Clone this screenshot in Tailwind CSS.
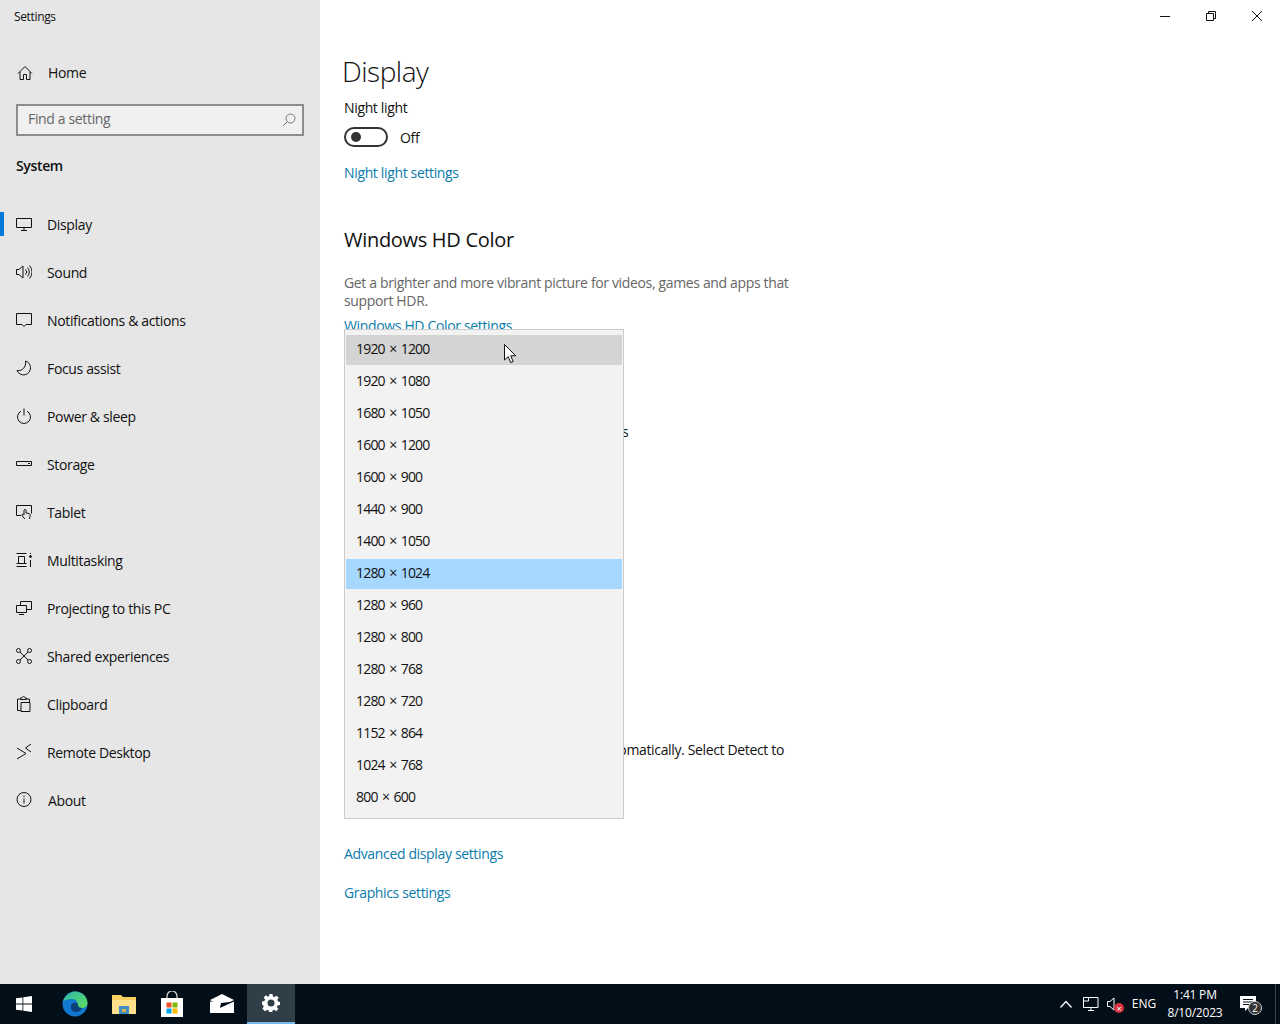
<!DOCTYPE html>
<html lang="en">
<head>
  <meta charset="UTF-8">
  <title>Settings</title>
  <script src="https://cdn.jsdelivr.net/npm/@tailwindcss/browser@4"></script>
</head>
<body class="relative w-[1280px] h-[1024px] overflow-hidden bg-white text-[#111] font-['Open_Sans','Noto_Sans',sans-serif] text-[14px] tracking-[-0.35px]">
  <div class="flex h-[984px]">
    <!-- sidebar -->
    <aside class="w-[320px] bg-[#e6e6e6] shrink-0">
      <div class="h-8 pl-[14px] text-[12px] leading-[34px]">Settings</div>
      <a class="flex items-center h-12 mt-[17px] pl-4">
        <svg class="w-4 h-4 mr-[15px] ml-px" viewBox="0 0 16 16" fill="none" stroke="#111" stroke-width="1"><path d="M1 8.500 8 1.500l7 7M3 7v7.500h3.500V9.500h3v5H13V7"/></svg>
        <span class="-mt-[2px]">Home</span>
      </a>
      <div class="flex items-center justify-between h-8 mx-4 mt-[7px] pl-[10px] pr-[6px] border-2 border-[#8d8d8d] bg-[#f0f0f0] text-[#666]">
        <span class="-mt-[4px]">Find a setting</span>
        <svg class="w-[14px] h-[14px]" viewBox="0 0 14 14" fill="none" stroke="#777" stroke-width="1"><circle cx="8.500" cy="5.500" r="4.500"/><path d="M5.200 8.800 1 13"/></svg>
      </div>
      <div class="pl-4 mt-5 font-semibold leading-5">System</div>
      <nav class="mt-6">
        <a class="relative flex items-center h-12 pl-4">
          <span class="absolute left-0 top-[12px] w-1 h-6 bg-[#0078d7]"></span>
          <svg class="w-4 h-4 mr-[15px]" viewBox="0 0 16 16" fill="none" stroke="#111"><path d="M.5 2.500h15v9H.5zM8 11.500v2.500M5 14.500h6"/></svg>
          <span>Display</span>
        </a>
        <a class="flex items-center h-12 pl-4">
          <svg class="w-4 h-4 mr-[15px]" viewBox="0 0 16 16" fill="none" stroke="#111"><path d="M.5 5.500h2.500L7 2v12l-4-3.500H.5zM9.500 5.500a3.500 3.500 0 0 1 0 5M11.500 3.500a6.500 6.500 0 0 1 0 9M13.500 1.500a9.500 9.500 0 0 1 0 13"/></svg>
          <span>Sound</span>
        </a>
        <a class="flex items-center h-12 pl-4">
          <svg class="w-4 h-4 mr-[15px]" viewBox="0 0 16 16" fill="none" stroke="#111"><path d="M.5 1.500h15v11H10l-2 2-2-2H.5z"/></svg>
          <span>Notifications &amp; actions</span>
        </a>
        <a class="flex items-center h-12 pl-4">
          <svg class="w-4 h-4 mr-[15px]" viewBox="0 0 16 16" fill="none" stroke="#111"><path d="M9.500 1c3 1 5 3.500 5 6.500a7 7 0 0 1-13.500 3c5 1 9.500-3.500 8.500-9.500z"/></svg>
          <span>Focus assist</span>
        </a>
        <a class="flex items-center h-12 pl-4">
          <svg class="w-4 h-4 mr-[15px]" viewBox="0 0 16 16" fill="none" stroke="#111"><path d="M5 3.200a6.500 6.500 0 1 0 6 0M8 .5v7"/></svg>
          <span>Power &amp; sleep</span>
        </a>
        <a class="flex items-center h-12 pl-4">
          <svg class="w-4 h-4 mr-[15px]" viewBox="0 0 16 16" fill="none" stroke="#111"><path d="M.5 5.500h15v4H.5zM12 7.500h2"/></svg>
          <span>Storage</span>
        </a>
        <a class="flex items-center h-12 pl-4">
          <svg class="w-4 h-4 mr-[15px]" viewBox="0 0 16 16" fill="none" stroke="#111"><path d="M5 11.500H.5v-10h15v8M9 15c-1-1-3-3-3-4s1-1 2 0V6.500c0-1.500 2-1.500 2 0V9l3 .5c1 .3 1.500 1 1 3l-.5 2.500"/></svg>
          <span>Tablet</span>
        </a>
        <a class="flex items-center h-12 pl-4">
          <svg class="w-4 h-4 mr-[15px]" viewBox="0 0 16 16" fill="none" stroke="#111"><path d="M.5 1.500h10M.5 14.500h10M2.500 4.500h6v7h-6zM.5 11.500h10M14.500 8v7M14.500 1v1"/><circle cx="14.500" cy="4.500" r="1" fill="#111"/></svg>
          <span>Multitasking</span>
        </a>
        <a class="flex items-center h-12 pl-4">
          <svg class="w-4 h-4 mr-[15px]" viewBox="0 0 16 16" fill="none" stroke="#111"><path d="M4.500 5V1.500h11v8H11M.5 5.500h10v7H.5zM3 14.500h5"/></svg>
          <span>Projecting to this PC</span>
        </a>
        <a class="flex items-center h-12 pl-4">
          <svg class="w-4 h-4 mr-[15px]" viewBox="0 0 16 16" fill="none" stroke="#111"><circle cx="2.500" cy="2.500" r="2"/><circle cx="13.500" cy="2.500" r="2"/><circle cx="2.500" cy="13.500" r="2"/><circle cx="13.500" cy="13.500" r="2"/><path d="m4 4 8 8M12 4l-8 8"/></svg>
          <span>Shared experiences</span>
        </a>
        <a class="flex items-center h-12 pl-4">
          <svg class="w-4 h-4 mr-[15px]" viewBox="0 0 16 16" fill="none" stroke="#111"><path d="M4 3H1.500v11.500H5M11 3h2.500v3M5 6.500h9v9H5zM4.500 3.500h6V2H9C9 0 6 0 6 2H4.500z"/></svg>
          <span>Clipboard</span>
        </a>
        <a class="flex items-center h-12 pl-4">
          <svg class="w-4 h-4 mr-[15px]" viewBox="0 0 16 16" fill="none" stroke="#111"><path d="m1 4 9 5.500L1 15M15 0 9.500 4l5.500 4"/></svg>
          <span>Remote Desktop</span>
        </a>
        <a class="flex items-center h-12 pl-4">
          <svg class="w-4 h-4 mr-4" viewBox="0 0 16 16" fill="none" stroke="#111"><circle cx="8" cy="7.500" r="7"/><path d="M8 6.500v5M8 3.500v1.500"/></svg>
          <span>About</span>
        </a>
      </nav>
    </aside>

    <!-- main pane -->
    <main class="flex-1">
      <div class="flex justify-end h-8">
        <div class="flex items-center justify-center w-[46px]"><svg class="w-[10px] h-[10px]" viewBox="0 0 10 10" stroke="#111"><path d="M0 5.500h10"/></svg></div>
        <div class="flex items-center justify-center w-[46px]"><svg class="w-[10px] h-[10px]" viewBox="0 0 10 10" fill="none" stroke="#111"><path d="M.5 2.500h7v7h-7zM2.500 2.500v-2h7v7h-2"/></svg></div>
        <div class="flex items-center justify-center w-[46px]"><svg class="w-[10px] h-[10px]" viewBox="0 0 10 10" stroke="#111"><path d="m0 0 10 10M10 0 0 10"/></svg></div>
      </div>
      <div class="pl-6 w-[484px]">
        <h1 class="-ml-[2px] mt-[19px] text-[28px] leading-10 font-light tracking-[-0.5px]">Display</h1>
        <div class="mt-[7px] leading-5">Night light</div>
        <div class="flex items-center mt-[9px] h-5">
          <div class="flex items-center w-11 h-5 pl-[5px] rounded-full border-2 border-[#333]"><span class="w-[10px] h-[10px] rounded-full bg-[#333]"></span></div>
          <span class="ml-3">Off</span>
        </div>
        <a class="block mt-4 leading-5 text-[#0b7bab]">Night light settings</a>
        <h2 class="mt-[43px] text-[20px] leading-7 tracking-[-0.3px]">Windows HD Color</h2>
        <p class="mt-5 leading-[18px] text-[#666]">Get a brighter and more vibrant picture for videos, games and apps that support HDR.</p>
        <a class="block mt-[6px] leading-5 text-[#0b7bab]">Windows HD Color settings</a>
        <!-- only the ends of these two lines stick out from under the dropdown -->
        <div class="mt-[86px] pl-[278px] leading-5">s</div>
        <div class="mt-[298px] w-[440px] text-right leading-5 whitespace-nowrap">omatically. Select Detect to</div>
        <a class="block mt-[84px] leading-5 text-[#0b7bab]">Advanced display settings</a>
        <a class="block mt-[19px] leading-5 text-[#0b7bab]">Graphics settings</a>
      </div>
    </main>
  </div>

  <!-- resolution dropdown -->
  <ul class="absolute left-[344px] top-[329px] w-[280px] h-[490px] py-[5px] px-px border border-[#ccc] bg-[#f2f2f2] flex flex-col gap-[2px] tracking-[-0.8px] [word-spacing:1.5px]">
    <li class="h-[30px] pl-[10px] leading-[27px] bg-[#d4d4d4]">1920 × 1200</li>
    <li class="h-[30px] pl-[10px] leading-[27px]">1920 × 1080</li>
    <li class="h-[30px] pl-[10px] leading-[27px]">1680 × 1050</li>
    <li class="h-[30px] pl-[10px] leading-[27px]">1600 × 1200</li>
    <li class="h-[30px] pl-[10px] leading-[27px]">1600 × 900</li>
    <li class="h-[30px] pl-[10px] leading-[27px]">1440 × 900</li>
    <li class="h-[30px] pl-[10px] leading-[27px]">1400 × 1050</li>
    <li class="h-[30px] pl-[10px] leading-[27px] bg-[#a6d8ff]">1280 × 1024</li>
    <li class="h-[30px] pl-[10px] leading-[27px]">1280 × 960</li>
    <li class="h-[30px] pl-[10px] leading-[27px]">1280 × 800</li>
    <li class="h-[30px] pl-[10px] leading-[27px]">1280 × 768</li>
    <li class="h-[30px] pl-[10px] leading-[27px]">1280 × 720</li>
    <li class="h-[30px] pl-[10px] leading-[27px]">1152 × 864</li>
    <li class="h-[30px] pl-[10px] leading-[27px]">1024 × 768</li>
    <li class="h-[30px] pl-[10px] leading-[27px]">800 × 600</li>
  </ul>

  <!-- mouse pointer -->
  <svg class="absolute left-[504px] top-[344px] w-[13px] h-[20px]" viewBox="0 0 13 20"><path d="M.5.5v15.500l3.700-3.400 2.500 6 2.500-1-2.500-5.800h5z" fill="#fff" stroke="#111"/></svg>

  <!-- taskbar -->
  <footer class="flex items-center h-10 bg-[#020e18] text-white tracking-normal">
    <div class="flex items-center justify-center w-12 h-10">
      <svg class="w-4 h-4" viewBox="0 0 16 16" fill="#fff"><path d="M0 2.300 6.500 1.400v6.200H0zM7.300 1.300 16 0v7.600H7.300zM0 8.400h6.500v6.200L0 13.700zM7.300 8.400H16V16l-8.700-1.200z"/></svg>
    </div>
    <div class="flex items-center justify-center w-[50px] h-10 ml-[2px]">
      <svg class="w-[26px] h-[26px]" viewBox="0 0 26 26"><defs><linearGradient id="edgeA" x1="0" y1="0" x2="1" y2="1"><stop offset="0" stop-color="#2fb7b0"/><stop offset="1" stop-color="#5fdc5a"/></linearGradient></defs><circle cx="13" cy="13" r="12.500" fill="#1277cf"/><path d="M1 11C3 3 10 .5 13 .5c7 0 12.500 5 12.500 11.500 0 3-2.500 5-5.500 5-2.500 0-4-1-4-2.500 0-3-1.500-6.500-6-6.500-4 0-7.500 1-9.500 2.500z" fill="url(#edgeA)"/><path d="M16 14.500c0 1.500 1.500 2.500 4 2.500-1 3-4 4.500-7 4-3-.6-4.500-3-4-6 .4-2 2-3.500 4-3.500 1.500 0 3 1 3 3z" fill="#0a3f78"/></svg>
    </div>
    <div class="flex items-center justify-center w-[47px] h-10">
      <svg class="w-6 h-5" viewBox="0 0 24 20"><path d="M0 1h9l2 2h13v17H0z" fill="#f6cf5f"/><path d="M0 6h24v14H0z" fill="#fce08a"/><path d="M7 12h10v8H7z" fill="#3f8fc4"/><path d="M10 15h4v3h-4z" fill="#d9b44a"/></svg>
    </div>
    <div class="flex items-center justify-center w-[50px] h-10">
      <svg class="w-6 h-[26px]" viewBox="0 0 24 26"><path d="M7 8V5a5 5 0 0 1 10 0v3" fill="none" stroke="#ddd" stroke-width="1.200"/><path d="M1 7h22v19H1z" fill="#fff"/><path d="M6.500 11.500h5v5h-5z" fill="#f25022"/><path d="M12.500 11.500h5v5h-5z" fill="#7fba00"/><path d="M6.500 17.500h5v5h-5z" fill="#00a4ef"/><path d="M12.500 17.500h5v5h-5z" fill="#ffb900"/></svg>
    </div>
    <div class="flex items-center justify-center w-[50px] h-10">
      <svg class="w-6 h-5" viewBox="0 0 24 20"><path d="M0 6 12 0l12 6-4 2-9 1-2 3z" fill="#fff"/><path d="M0 7.500V19h24V7.500L12 13l-2 1 1-5z" fill="#fff"/></svg>
    </div>
    <div class="flex items-center justify-center w-12 h-10 bg-[#2f3e47] border-b-2 border-[#76b9ed]">
      <svg class="w-[18px] h-[18px]" viewBox="0 0 18 18"><path d="M7.500 0h3l.4 2.400 1.700.7 2-1.400 2.100 2.100-1.400 2 .7 1.700 2 .5v3l-2.400.4-.7 1.700 1.400 2-2.100 2.100-2-1.400-1.700.7-.4 2.400h-3l-.4-2.400-1.700-.7-2 1.400L.3 14.700l1.400-2L1 11 0 10.500v-3l2.400-.4.700-1.700-1.400-2L3.800 1.300l2 1.400 1.300-.7z" fill="#fff"/><circle cx="9" cy="9" r="3.500" fill="#2f3e47"/></svg>
    </div>
    <div class="flex items-center ml-auto h-10">
      <svg class="w-[12px] h-2 mr-[11px]" viewBox="0 0 12 8" fill="none" stroke="#fff" stroke-width="1.300"><path d="m.5 7.500 5.500-6 5.500 6"/></svg>
      <svg class="w-4 h-4 mr-[8px]" viewBox="0 0 16 16" fill="none" stroke="#fff"><path d="M4 1.500h11v10H.5v-10H4M8 11.500v3M5 14.500h6M.5 5h5V1.500"/></svg>
      <span class="relative block w-4 h-4 mr-[8px]">
        <svg class="w-4 h-4" viewBox="0 0 16 16" fill="none" stroke="#fff"><path d="M.5 5.500H3L7 2v12l-4-3.500H.5z"/></svg>
        <span class="absolute left-[7px] top-[7px] flex items-center justify-center w-[10px] h-[10px] rounded-full bg-[#d6343e] text-[9px] leading-none">×</span>
      </span>
      <span class="text-[12px] w-[26px] text-center">ENG</span>
      <div class="w-[74px] ml-px text-[12px] leading-[18px] text-center tracking-[-0.2px]">
        <div>1:41 PM</div>
        <div>8/10/2023</div>
      </div>
      <span class="relative block w-[22px] h-6 ml-2">
        <svg class="w-4 h-4 mt-1" viewBox="0 0 16 16" fill="#fff"><path d="M0 0h16v12H8l-3 3v-3H0z"/><path d="M3 3.500h10M3 6h10M3 8.500h6" stroke="#020e18"/></svg>
        <span class="absolute left-[8px] top-[9px] flex items-center justify-center w-[14px] h-[14px] rounded-full border border-[#ccc] bg-[#333] text-[10px] leading-none">2</span>
      </span>
      <span class="block w-px h-10 ml-[13px] mr-1 bg-[#3a4650]"></span>
    </div>
  </footer>
</body>
</html>
